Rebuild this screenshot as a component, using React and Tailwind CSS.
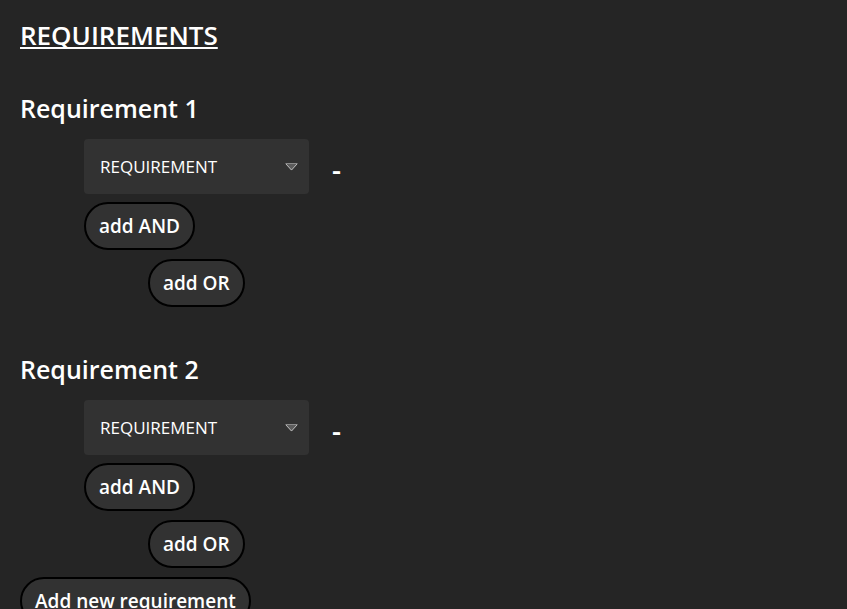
import React from "react";

function Pill({ children }) {
  return (
    <button
      type="button"
      className="block h-12 rounded-3xl border-2 border-black bg-[#323232] px-[13px] text-[19px] font-semibold whitespace-nowrap"
    >
      {children}
    </button>
  );
}

function Requirement({ number }) {
  return (
    <section>
      <h2 className="text-[25px] leading-9 font-semibold">Requirement {number}</h2>
      <div className="mt-[13px] ml-16 flex items-center gap-[23px]">
        <div className="relative">
          <select
            aria-label={`Requirement ${number} type`}
            className="block h-[55px] w-[225px] appearance-none rounded bg-[#323232] pl-4 text-[17px]"
          >
            <option>REQUIREMENT</option>
          </select>
          <svg
            className="pointer-events-none absolute top-6 right-[11px] h-2 w-[13px]"
            viewBox="0 0 13 8"
            aria-hidden="true"
          >
            <path d="M0.5 0.5H12.5L6.5 7.5Z" fill="#5c5c5c" />
            <path d="M0.5 0.5H12.5" stroke="#8a8a8a" />
            <path d="M1 1L6.5 7L12 1" fill="none" stroke="#bdbdbd" />
          </svg>
        </div>
        <button type="button" aria-label="Remove" className="pt-1 text-[28px] leading-9 font-semibold">
          -
        </button>
      </div>
      <div className="mt-2 ml-16">
        <Pill>add AND</Pill>
      </div>
      <div className="mt-[9px] ml-32">
        <Pill>add OR</Pill>
      </div>
    </section>
  );
}

export default function App() {
  return (
    <main className="h-screen overflow-hidden bg-[#252525] px-5 pt-[17px] font-['Open_Sans','Noto_Sans',sans-serif] text-white">
      <h1 className="mb-[37px] text-[26px] leading-9 font-semibold underline decoration-2 underline-offset-2 [text-decoration-skip-ink:none]">
        REQUIREMENTS
      </h1>
      <div className="mb-[9px] flex flex-col gap-11">
        <Requirement number={1} />
        <Requirement number={2} />
      </div>
      <Pill>Add new requirement</Pill>
    </main>
  );
}
